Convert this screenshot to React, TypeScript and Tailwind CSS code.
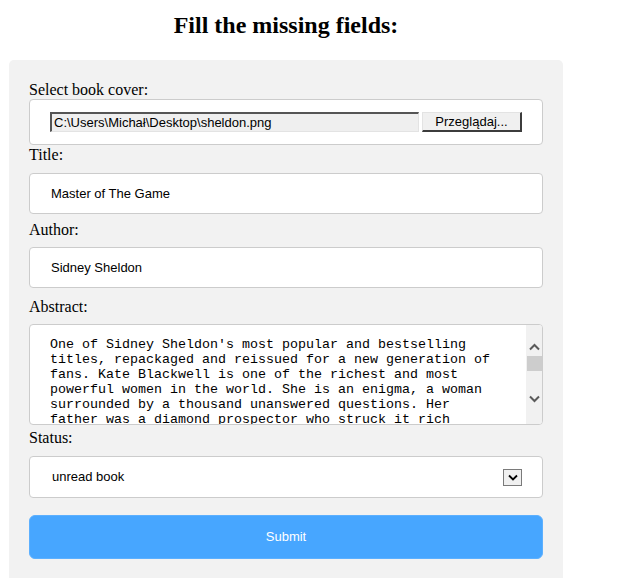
import React from 'react';

const abstractLines = [
  "One of Sidney Sheldon's most popular and bestselling",
  'titles, repackaged and reissued for a new generation of',
  'fans. Kate Blackwell is one of the richest and most',
  'powerful women in the world. She is an enigma, a woman',
  'surrounded by a thousand unanswered questions. Her',
  'father was a diamond prospector who struck it rich',
];

const Label = ({ children, className = '' }: { children: React.ReactNode; className?: string }) => (
  <label className={`block h-[18px] text-[16px] leading-[18px] text-black font-['Liberation_Serif',serif] ${className}`}>
    {children}
  </label>
);

const TextField = ({ value, className = '' }: { value: string; className?: string }) => (
  <div
    className={`flex h-[41px] items-center rounded-[4px] border border-[#cccccc] bg-white pl-[21px] text-[13px] text-black font-['Liberation_Sans',Arial,sans-serif] ${className}`}
  >
    {value}
  </div>
);

export default function App() {
  return (
    <div className="min-h-[578px] bg-white">
      <div className="ml-[9px] w-[554px]">
        <h2 className="pt-[12px] pb-[21px] text-center text-[24px] font-bold leading-[27px] text-black font-['Liberation_Serif',serif]">
          Fill the missing fields:
        </h2>

        <form className="rounded-[5px] bg-[#f2f2f2] px-[20px] pt-[21px] pb-[40px]">
          <Label>Select book cover:</Label>
          <div className="flex h-[46px] items-center rounded-[4px] border border-[#cccccc] bg-white pl-[20px] font-['Liberation_Sans',Arial,sans-serif] text-[13px] text-black">
            <div className="flex h-[20px] w-[369px] items-center border-t-2 border-l-2 border-b border-r border-t-[#555] border-l-[#555] border-b-[#e3e3e3] border-r-[#e3e3e3] bg-[#efefef] pl-[2px]">
              C:\Users\Michał\Desktop\sheldon.png
            </div>
            <div className="ml-[3px] flex h-[20px] w-[100px] items-center justify-center border-t border-l border-b-2 border-r-2 border-t-[#e3e3e3] border-l-[#e3e3e3] border-b-[#3c3c3c] border-r-[#3c3c3c] bg-[#f0f0f0]">
              Przeglądaj...
            </div>
          </div>

          <Label className="mt-[1px]">Title:</Label>
          <TextField value="Master of The Game" className="mt-[9px]" />

          <Label className="mt-[7px]">Author:</Label>
          <TextField value="Sidney Sheldon" className="mt-[8px]" />

          <Label className="mt-[10px]">Abstract:</Label>
          <div className="mt-[8px] flex h-[101px] overflow-hidden rounded-[4px] border border-[#cccccc] bg-white">
            <div className="flex-1 overflow-hidden pt-[12px] pl-[20px] text-[13.33px] leading-[15px] text-black font-['Liberation_Mono','Courier_New',monospace] whitespace-pre">
              {abstractLines.map((line) => (
                <div key={line}>{line}</div>
              ))}
            </div>
            <div className="flex w-[16px] flex-col items-center bg-[#f1f1f1]">
              <svg width="11" height="8" viewBox="0 0 11 8" className="mt-[18px]">
                <path d="M1 6.5 L5.5 2 L10 6.5" fill="none" stroke="#5a5a5a" strokeWidth="2" />
              </svg>
              <div className="mt-[5px] h-[15px] w-[15px] bg-[#cdcdcd]" />
              <svg width="11" height="8" viewBox="0 0 11 8" className="mt-[24px]">
                <path d="M1 1.5 L5.5 6 L10 1.5" fill="none" stroke="#5a5a5a" strokeWidth="2" />
              </svg>
            </div>
          </div>

          <Label className="mt-[4px]">Status:</Label>
          <div className="mt-[9px] flex h-[42px] items-center justify-between rounded-[4px] border border-[#cccccc] bg-white pl-[22px] pr-[20px] text-[13px] text-black font-['Liberation_Sans',Arial,sans-serif]">
            <span>unread book</span>
            <div className="flex h-[17px] w-[19px] items-center justify-center border border-[#7a7a7a] bg-[#f0f0f0]">
              <svg width="10" height="7" viewBox="0 0 10 7">
                <path d="M1 1.5 L5 5.5 L9 1.5" fill="none" stroke="#000" strokeWidth="1.8" />
              </svg>
            </div>
          </div>

          <button
            type="button"
            className="mt-[17px] flex h-[44px] w-full items-center justify-center rounded-[6px] border border-[#5cb0ff] bg-[#47a6ff] text-[13px] text-white font-['Liberation_Sans',Arial,sans-serif]"
          >
            Submit
          </button>
        </form>
      </div>
    </div>
  );
}
